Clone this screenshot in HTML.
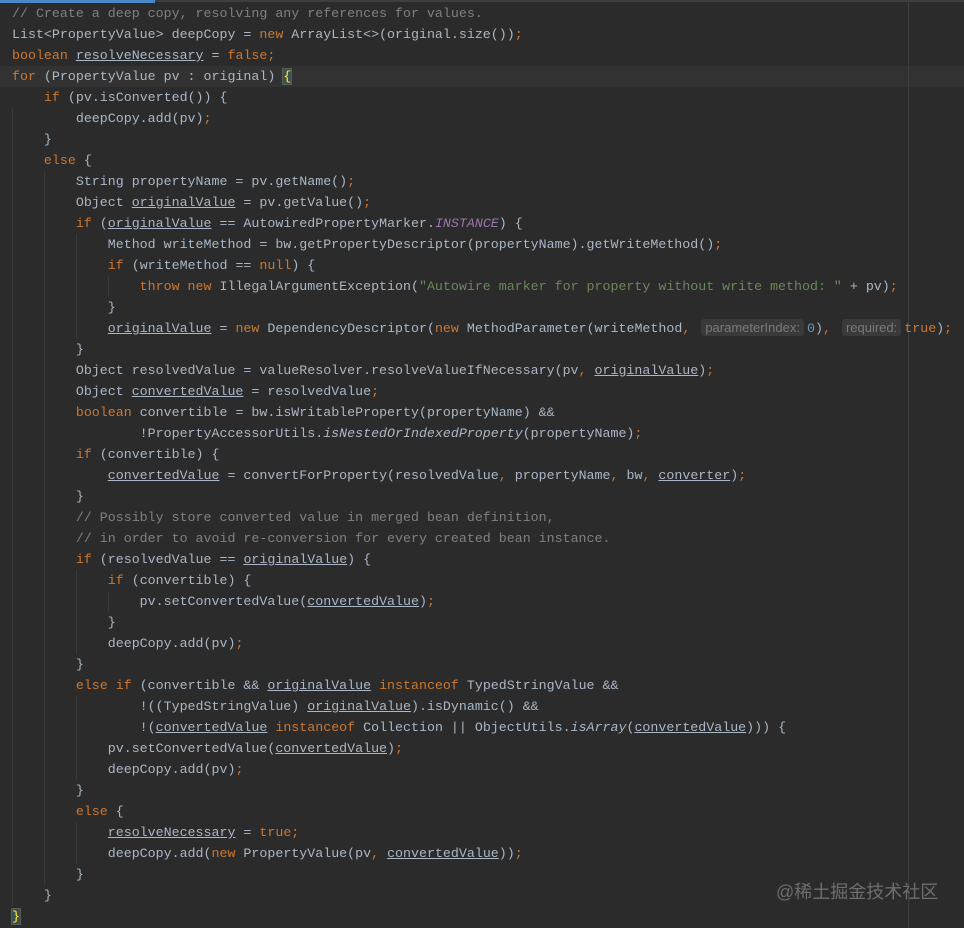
<!DOCTYPE html>
<html><head><meta charset="utf-8"><style>
body{margin:0;background:#2b2b2b;width:964px;height:928px;overflow:hidden;position:relative}
pre{margin:0;position:absolute;left:12px;top:3px;font-family:"Liberation Mono",monospace;font-size:13.3px;line-height:21px;color:#a9b7c6;white-space:pre}
.k{color:#cc7832}.c{color:#808080}.s{color:#6a8759}.n{color:#6897bb}
.u{text-decoration:underline;text-decoration-color:#a9b7c6}
.i{font-style:italic}.p{font-style:italic;color:#9876aa}
.h{font-family:"Liberation Sans",sans-serif;font-size:13px;line-height:1;color:#7a7a7a;background:#3a3a3a;border-radius:3px;padding:1px 4px;margin:0 3px 0 11px}
.cur{position:absolute;left:0;top:66px;width:964px;height:21px;background:#323232}
.g{position:absolute;width:1px;background:#393939}
.bm{background:#3b514d;color:#ffef28;outline:1px solid #5a5a5a}
.top1{position:absolute;left:0;top:0;width:155px;height:3px;background:#4a88c7}
.top2{position:absolute;left:155px;top:0;width:809px;height:2px;background:#3c3f41}
.rm{position:absolute;left:908px;top:0;width:1px;height:928px;background:#3e3e3e}
.wm{position:absolute;left:776px;top:878px;font-family:"Liberation Sans","Noto Sans CJK SC",sans-serif;font-size:18px;color:#6e6e6e}
</style></head><body>
<div class="cur"></div>
<div class="top1"></div><div class="top2"></div>
<div class="rm"></div>
<div class="g" style="left:12px;top:108px;height:798px"></div>
<div class="g" style="left:44px;top:171px;height:714px"></div>
<div class="g" style="left:76px;top:234px;height:105px"></div>
<div class="g" style="left:108px;top:276px;height:21px"></div>
<div class="g" style="left:76px;top:570px;height:84px"></div>
<div class="g" style="left:108px;top:591px;height:21px"></div>
<div class="g" style="left:76px;top:696px;height:84px"></div>
<div class="g" style="left:76px;top:822px;height:42px"></div>
<pre><span class="c">// Create a deep copy, resolving any references for values.</span>
List&lt;PropertyValue&gt; deepCopy = <span class="k">new </span>ArrayList&lt;&gt;(original.size())<span class="k">;</span>
<span class="k">boolean </span><span class="u">resolveNecessary</span> = <span class="k">false;</span>
<span class="k">for </span>(PropertyValue pv : original) <span class="bm">{</span>
    <span class="k">if </span>(pv.isConverted()) {
        deepCopy.add(pv)<span class="k">;</span>
    }
    <span class="k">else </span>{
        String propertyName = pv.getName()<span class="k">;</span>
        Object <span class="u">originalValue</span> = pv.getValue()<span class="k">;</span>
        <span class="k">if </span>(<span class="u">originalValue</span> == AutowiredPropertyMarker.<span class="p">INSTANCE</span>) {
            Method writeMethod = bw.getPropertyDescriptor(propertyName).getWriteMethod()<span class="k">;</span>
            <span class="k">if </span>(writeMethod == <span class="k">null</span>) {
                <span class="k">throw new </span>IllegalArgumentException(<span class="s">"Autowire marker for property without write method: "</span> + pv)<span class="k">;</span>
            }
            <span class="u">originalValue</span> = <span class="k">new </span>DependencyDescriptor(<span class="k">new </span>MethodParameter(writeMethod<span class="k">,</span><span class="h">parameterIndex:</span><span class="n">0</span>)<span class="k">,</span><span class="h">required:</span><span class="k">true</span>)<span class="k">;</span>
        }
        Object resolvedValue = valueResolver.resolveValueIfNecessary(pv<span class="k">, </span><span class="u">originalValue</span>)<span class="k">;</span>
        Object <span class="u">convertedValue</span> = resolvedValue<span class="k">;</span>
        <span class="k">boolean </span>convertible = bw.isWritableProperty(propertyName) &amp;&amp;
                !PropertyAccessorUtils.<span class="i">isNestedOrIndexedProperty</span>(propertyName)<span class="k">;</span>
        <span class="k">if </span>(convertible) {
            <span class="u">convertedValue</span> = convertForProperty(resolvedValue<span class="k">, </span>propertyName<span class="k">, </span>bw<span class="k">, </span><span class="u">converter</span>)<span class="k">;</span>
        }
        <span class="c">// Possibly store converted value in merged bean definition,</span>
        <span class="c">// in order to avoid re-conversion for every created bean instance.</span>
        <span class="k">if </span>(resolvedValue == <span class="u">originalValue</span>) {
            <span class="k">if </span>(convertible) {
                pv.setConvertedValue(<span class="u">convertedValue</span>)<span class="k">;</span>
            }
            deepCopy.add(pv)<span class="k">;</span>
        }
        <span class="k">else if </span>(convertible &amp;&amp; <span class="u">originalValue</span> <span class="k">instanceof </span>TypedStringValue &amp;&amp;
                !((TypedStringValue) <span class="u">originalValue</span>).isDynamic() &amp;&amp;
                !(<span class="u">convertedValue</span> <span class="k">instanceof </span>Collection || ObjectUtils.<span class="i">isArray</span>(<span class="u">convertedValue</span>))) {
            pv.setConvertedValue(<span class="u">convertedValue</span>)<span class="k">;</span>
            deepCopy.add(pv)<span class="k">;</span>
        }
        <span class="k">else </span>{
            <span class="u">resolveNecessary</span> = <span class="k">true;</span>
            deepCopy.add(<span class="k">new </span>PropertyValue(pv<span class="k">, </span><span class="u">convertedValue</span>))<span class="k">;</span>
        }
    }
<span class="bm">}</span></pre>
<div class="wm">@稀土掘金技术社区</div>
</body></html>
